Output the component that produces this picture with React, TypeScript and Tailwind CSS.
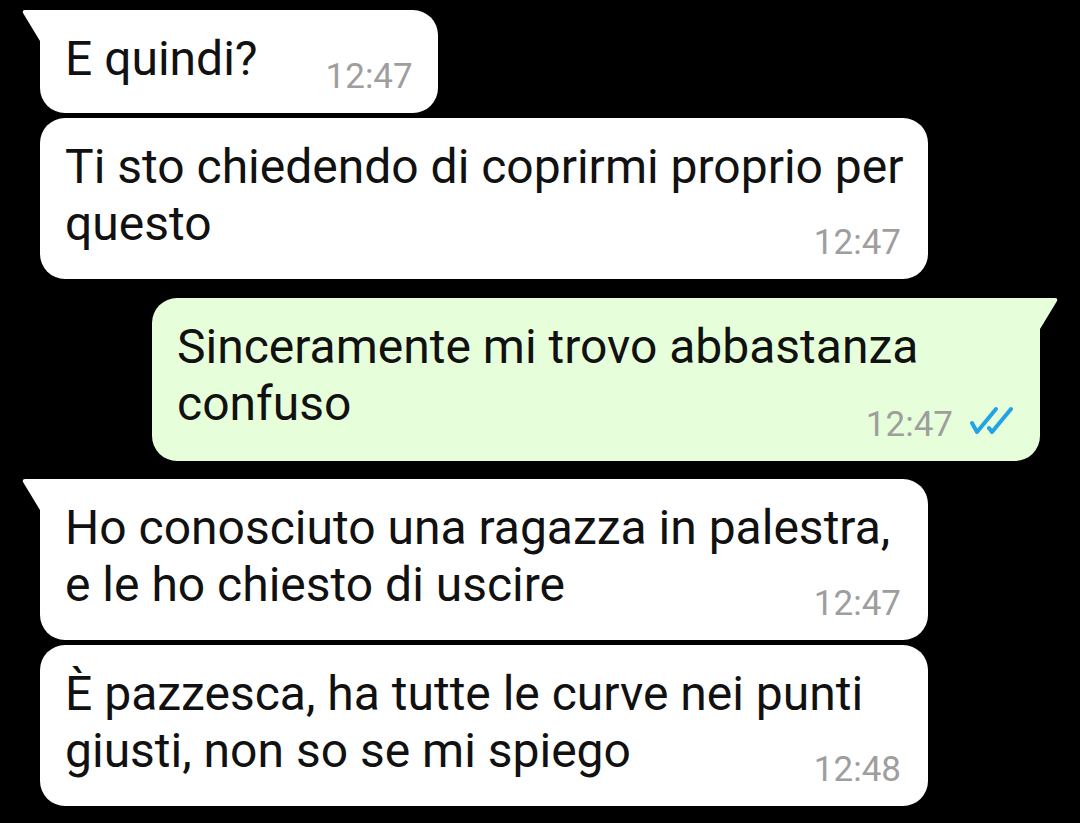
import React from "react";

type Msg = {
  lines: string[];
  time: string;
  out?: boolean;
  tail?: boolean;
  gapTop: string;
};

const messages: Msg[] = [
  { lines: ["E quindi?"], time: "12:47", tail: true, gapTop: "mt-[10px]" },
  {
    lines: ["Ti sto chiedendo di coprirmi proprio per", "questo"],
    time: "12:47",
    gapTop: "mt-[5px]",
  },
  {
    lines: ["Sinceramente mi trovo abbastanza", "confuso"],
    time: "12:47",
    out: true,
    tail: true,
    gapTop: "mt-[19px]",
  },
  {
    lines: ["Ho conosciuto una ragazza in palestra,", "e le ho chiesto di uscire"],
    time: "12:47",
    tail: true,
    gapTop: "mt-[18px]",
  },
  {
    lines: ["È pazzesca, ha tutte le curve nei punti", "giusti, non so se mi spiego"],
    time: "12:48",
    gapTop: "mt-[5px]",
  },
];

const Ticks = () => (
  <svg width="46" height="32" viewBox="0 0 46 32" className="ml-[14px] mb-[5px]">
    <path d="M5 18 L10 27 L29 4" fill="none" stroke="#22a3e4" strokeWidth="4" strokeLinecap="round" strokeLinejoin="round" />
    <path d="M22 23 L25 27 L44 4" fill="none" stroke="#22a3e4" strokeWidth="4" strokeLinecap="round" strokeLinejoin="round" />
  </svg>
);

const Tail = ({ out }: { out?: boolean }) =>
  out ? (
    <svg width="22" height="36" viewBox="0 0 22 36" className="absolute top-0 right-[-19px]">
      <path d="M0 0 L18 0 Q21 0 20 3 L0 36 Z" fill="#e6fed9" />
    </svg>
  ) : (
    <svg width="22" height="36" viewBox="0 0 22 36" className="absolute top-0 left-[-19px]">
      <path d="M22 0 L4 0 Q1 0 2 3 L22 36 Z" fill="#ffffff" />
    </svg>
  );

const Bubble = ({ m }: { m: Msg }) => {
  const bg = m.out ? "bg-[#e6fed9]" : "bg-white";
  const corner = m.tail ? (m.out ? "rounded-tr-none" : "rounded-tl-none") : "";
  const side = m.out ? "self-end mr-[40px]" : "self-start ml-[40px]";
  const single = m.lines.length === 1;

  return (
    <div className={`relative ${bg} ${side} ${m.gapTop} rounded-[25px] ${corner} pl-[25px] pr-[25px] pt-[20px] pb-[19px] ${single ? "" : "w-[888px]"}`}>
      {m.tail && <Tail out={m.out} />}
      {single ? (
        <div className="flex items-start">
          <span className="text-[48px] leading-[57px] text-[#111] whitespace-nowrap">{m.lines[0]}</span>
          <span className="ml-[68px] mt-[29px] text-[35px] leading-[35px] text-[#9e9e9e]">{m.time}</span>
        </div>
      ) : (
        <>
          <div className="text-[48px] leading-[57px] text-[#111] whitespace-nowrap">
            {m.lines.map((l, i) => (
              <div key={i}>{l}</div>
            ))}
          </div>
          <div className="flex justify-end items-end -mt-[27px] pr-[2px]">
            <span className="text-[35px] leading-[35px] text-[#9e9e9e]">{m.time}</span>
            {m.out && <Ticks />}
          </div>
        </>
      )}
    </div>
  );
};

export default function App() {
  return (
    <div className="w-[1080px] h-[823px] bg-black overflow-hidden flex flex-col font-['Roboto',sans-serif]">
      {messages.map((m, i) => (
        <Bubble key={i} m={m} />
      ))}
    </div>
  );
}
